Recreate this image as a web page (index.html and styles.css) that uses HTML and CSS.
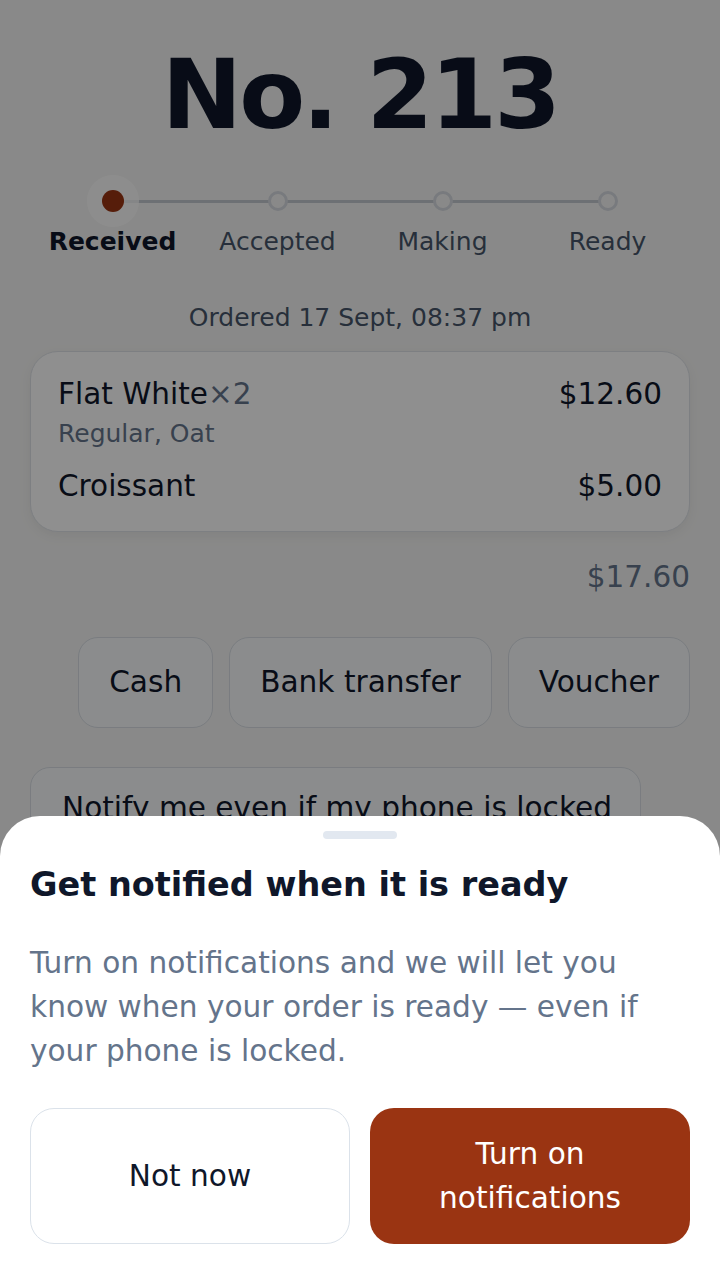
FILE: index.html
```html
<!DOCTYPE html>
<html lang="en">
<head>
  <meta charset="UTF-8">
  <meta name="viewport" content="width=device-width, initial-scale=1.0">
  <title>Order No. 213</title>
  <link rel="stylesheet" href="styles.css">
</head>
<body>

  <main class="order">
    <h1 class="order-number">No. 213</h1>

    <!-- Order progress -->
    <ol class="steps">
      <li class="step is-current"><span class="step-dot"></span><span class="step-label">Received</span></li>
      <li class="step"><span class="step-dot"></span><span class="step-label">Accepted</span></li>
      <li class="step"><span class="step-dot"></span><span class="step-label">Making</span></li>
      <li class="step"><span class="step-dot"></span><span class="step-label">Ready</span></li>
    </ol>

    <p class="ordered-at">Ordered 17 Sept, 08:37 pm</p>

    <section class="items">
      <div class="item">
        <div class="item-row">
          <span class="item-name">Flat White<span class="item-qty">×2</span></span>
          <span class="item-price">$12.60</span>
        </div>
        <div class="item-options">Regular, Oat</div>
      </div>
      <div class="item">
        <div class="item-row">
          <span class="item-name">Croissant</span>
          <span class="item-price">$5.00</span>
        </div>
      </div>
    </section>

    <p class="total">$17.60</p>

    <div class="pay-methods">
      <button class="pay-btn">Cash</button>
      <button class="pay-btn">Bank transfer</button>
      <button class="pay-btn">Voucher</button>
    </div>

    <div class="notify-box">Notify me even if my phone is locked</div>
  </main>

  <!-- Notification prompt -->
  <div class="backdrop"></div>
  <div class="sheet">
    <div class="sheet-handle"></div>
    <h2 class="sheet-title">Get notified when it is ready</h2>
    <p class="sheet-text">Turn on notifications and we will let you know when your order is ready — even if your phone is locked.</p>
    <div class="sheet-actions">
      <button class="btn btn-secondary">Not now</button>
      <button class="btn btn-primary">Turn on notifications</button>
    </div>
  </div>

</body>
</html>
```

FILE: styles.css
```css
body {
  margin: 0;
  font-family: "DejaVu Sans", "Liberation Sans", sans-serif;
  background-color: #f5f5f4;
  color: #0f172a;
}

.order {
  padding: 47px 30px 0;
}

.order-number {
  margin: 0;
  font-size: 96px;
  line-height: 1;
  font-weight: bold;
  letter-spacing: -0.03em;
  text-align: center;
}

/* Progress steps */
.steps {
  position: relative;
  display: grid;
  grid-template-columns: repeat(4, 1fr);
  margin: 32px 0 0;
  padding: 0;
  list-style: none;
}

.steps::before {
  content: "";
  position: absolute;
  left: 82px;
  right: 82px;
  top: 25px;
  height: 3px;
  background-color: #c3c8cf;
}

.step {
  display: flex;
  flex-direction: column;
  align-items: center;
}

.step-dot {
  position: relative;
  z-index: 1;
  box-sizing: border-box;
  width: 20px;
  height: 20px;
  margin: 16px 0;
  border: 3px solid #d6dae0;
  border-radius: 50%;
  background-color: #f5f5f4;
}

.step.is-current .step-dot {
  width: 22px;
  height: 22px;
  margin: 15px 0;
  border: none;
  background-color: #9a3412;
  box-shadow: 0 0 0 15px rgba(255, 255, 255, 0.7);
}

.step-label {
  font-size: 25px;
  line-height: 30px;
  color: #475569;
}

.step.is-current .step-label {
  font-weight: bold;
  color: #0f172a;
}

.ordered-at {
  margin: 46px 0 0;
  font-size: 25px;
  line-height: 30px;
  text-align: center;
  color: #475569;
}

/* Order items */
.items {
  margin-top: 18px;
  padding: 22px 27px 25px;
  border: 1px solid #dfe3e8;
  border-radius: 28px;
  background-color: #fff;
  box-shadow: 0 4px 14px rgba(0, 0, 0, 0.06);
}

.item + .item {
  margin-top: 16px;
}

.item-row {
  display: flex;
  justify-content: space-between;
  font-size: 29.5px;
  line-height: 40px;
}

.item-qty {
  color: #64748b;
}

.item-options {
  margin-top: 4px;
  font-size: 25px;
  line-height: 32px;
  color: #64748b;
}

.total {
  margin: 25px 0 0;
  font-size: 29.5px;
  line-height: 40px;
  text-align: right;
  color: #64748b;
}

/* Payment methods */
.pay-methods {
  display: flex;
  justify-content: flex-end;
  gap: 16px;
  margin-top: 40px;
}

.pay-btn {
  padding: 22px 30px;
  font-family: inherit;
  font-size: 29.6px;
  line-height: 45px;
  color: #0f172a;
  background-color: #f8fafc;
  border: 1px solid #d9dee5;
  border-radius: 20px;
}

.notify-box {
  display: inline-block;
  margin-top: 39px;
  padding: 18px 28px 18px 31px;
  font-size: 29.6px;
  line-height: 44px;
  border: 1px solid #d9dee5;
  border-radius: 20px;
  background-color: #f8fafc;
}

/* Overlay + bottom sheet */
.backdrop {
  position: fixed;
  inset: 0;
  z-index: 10;
  background-color: rgba(0, 0, 0, 0.44);
}

.sheet {
  position: fixed;
  left: 0;
  right: 0;
  bottom: 0;
  z-index: 11;
  padding: 15px 30px 30px;
  background-color: #fff;
  border-radius: 40px 40px 0 0;
}

.sheet-handle {
  width: 74px;
  height: 8px;
  margin: 0 auto 26px;
  border-radius: 4px;
  background-color: #e2e8f0;
}

.sheet-title {
  margin: 0 0 36px;
  font-size: 33.5px;
  line-height: 40px;
  font-weight: bold;
  color: #0f172a;
}

.sheet-text {
  margin: 0 0 35px;
  font-size: 29.6px;
  line-height: 44px;
  color: #64748b;
}

.sheet-actions {
  display: grid;
  grid-template-columns: 1fr 1fr;
  gap: 20px;
}

.btn {
  min-height: 136px;
  padding: 24px 28px;
  font-family: inherit;
  font-size: 29.6px;
  line-height: 44px;
  border-radius: 24px;
  cursor: pointer;
}

.btn-secondary {
  color: #0f172a;
  background-color: #fff;
  border: 1.5px solid #dbe2ea;
}

.btn-primary {
  color: #fff;
  background-color: #9a3412;
  border: none;
}
```
